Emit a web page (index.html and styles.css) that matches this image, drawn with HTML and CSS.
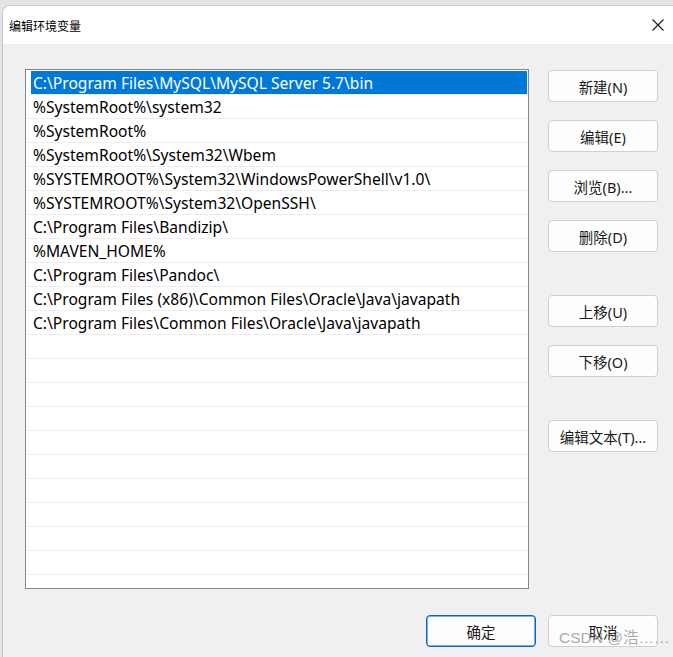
FILE: index.html
```html
<!DOCTYPE html>
<html lang="zh-CN">
<head>
<meta charset="utf-8">
<title>编辑环境变量</title>
<link rel="stylesheet" href="styles.css">
</head>
<body>
<div class="desk">
  <div class="window">
    <div class="titlebar">
      <span class="title">编辑环境变量</span>
      <svg class="close" width="12" height="12" viewBox="0 0 12 12"><path d="M0.5 0.5 L11.5 11.5 M11.5 0.5 L0.5 11.5" stroke="#1a1a1a" stroke-width="1.1" fill="none"/></svg>
    </div>
    <div class="content">
      <div class="main">
        <div class="list">
          <div class="row selected"><span>C:\Program Files\MySQL\MySQL Server 5.7\bin</span></div>
          <div class="row"><span>%SystemRoot%\system32</span></div>
          <div class="row"><span>%SystemRoot%</span></div>
          <div class="row"><span>%SystemRoot%\System32\Wbem</span></div>
          <div class="row"><span>%SYSTEMROOT%\System32\WindowsPowerShell\v1.0\</span></div>
          <div class="row"><span>%SYSTEMROOT%\System32\OpenSSH\</span></div>
          <div class="row"><span>C:\Program Files\Bandizip\</span></div>
          <div class="row"><span>%MAVEN_HOME%</span></div>
          <div class="row"><span>C:\Program Files\Pandoc\</span></div>
          <div class="row"><span>C:\Program Files (x86)\Common Files\Oracle\Java\javapath</span></div>
          <div class="row"><span>C:\Program Files\Common Files\Oracle\Java\javapath</span></div>
          <div class="row"></div>
          <div class="row"></div>
          <div class="row"></div>
          <div class="row"></div>
          <div class="row"></div>
          <div class="row"></div>
          <div class="row"></div>
          <div class="row"></div>
          <div class="row"></div>
          <div class="row"></div>
          <div class="row"></div>
        </div>
        <div class="side">
          <button class="btn">新建(N)</button>
          <button class="btn">编辑(E)</button>
          <button class="btn">浏览(B)...</button>
          <button class="btn">删除(D)</button>
          <button class="btn group">上移(U)</button>
          <button class="btn">下移(O)</button>
          <button class="btn group">编辑文本(T)...</button>
        </div>
      </div>
      <div class="footer">
        <button class="btn primary">确定</button>
        <button class="btn">取消</button>
      </div>
    </div>
  </div>
  <div class="watermark">CSDN @浩……</div>
</div>
</body>
</html>
```

FILE: styles.css
```css
html, body {
  margin: 0;
  padding: 0;
}
body {
  width: 673px;
  height: 657px;
  overflow: hidden;
  background: #e4e4e4;
  font-family: "Noto Sans", "Noto Sans CJK SC", sans-serif;
}
.desk {
  position: relative;
  padding: 5px 0 0 2px;
  height: 652px;
}
.window {
  width: 671px;
  height: 652px;
  border: 1px solid #c9c9c9;
  border-right: none;
  border-bottom: none;
  border-top-left-radius: 8px;
  background: #f0f0f0;
  overflow: hidden;
  box-sizing: border-box;
}
.titlebar {
  height: 38px;
  background: #ffffff;
  display: flex;
  align-items: center;
  justify-content: space-between;
  padding: 0 9px 0 6px;
}
.title {
  font-family: "Noto Sans CJK SC", sans-serif;
  font-size: 12px;
  color: #000;
}
.close {
  display: block;
}
.content {
  padding: 25px 15px 0 22px;
}
.main {
  display: flex;
  gap: 19px;
}
.list {
  width: 504px;
  height: 520px;
  box-sizing: border-box;
  border: 1px solid #828790;
  background: #ffffff;
  padding: 1px 1px 0 1px;
  overflow: hidden;
}
.row {
  height: 23px;
  border-bottom: 1px solid #ededed;
  display: flex;
  align-items: center;
  font-size: 15.6px;
  color: #000;
  white-space: nowrap;
}
.row span {
  padding-left: 6px;
}
.row.selected {
  margin-left: 4px;
  background: #0078d7;
  color: #ffffff;
}
.row.selected span {
  padding-left: 2px;
}
.side {
  display: flex;
  flex-direction: column;
  gap: 18px;
  padding-top: 1px;
}
.btn {
  width: 110px;
  height: 32px;
  box-sizing: border-box;
  border: 1px solid #d0d0d0;
  border-radius: 4px;
  background: #fdfdfd;
  font-family: "Noto Sans", "Noto Sans CJK SC", sans-serif;
  font-size: 14.5px;
  color: #1a1a1a;
  padding: 0;
  margin: 0;
}
.btn.group {
  margin-top: 25px;
}
.footer {
  display: flex;
  justify-content: flex-end;
  gap: 12px;
  margin-top: 26px;
}
.btn.primary {
  border: 1px solid #0067c0;
  box-shadow: inset 0 0 0 0.5px #0067c0;
}
.watermark {
  position: absolute;
  left: 559px;
  top: 629px;
  font-family: "Liberation Sans", "Noto Sans CJK SC", sans-serif;
  font-size: 15.5px;
  line-height: 18px;
  color: rgba(110, 110, 110, 0.6);
  white-space: nowrap;
}
```
